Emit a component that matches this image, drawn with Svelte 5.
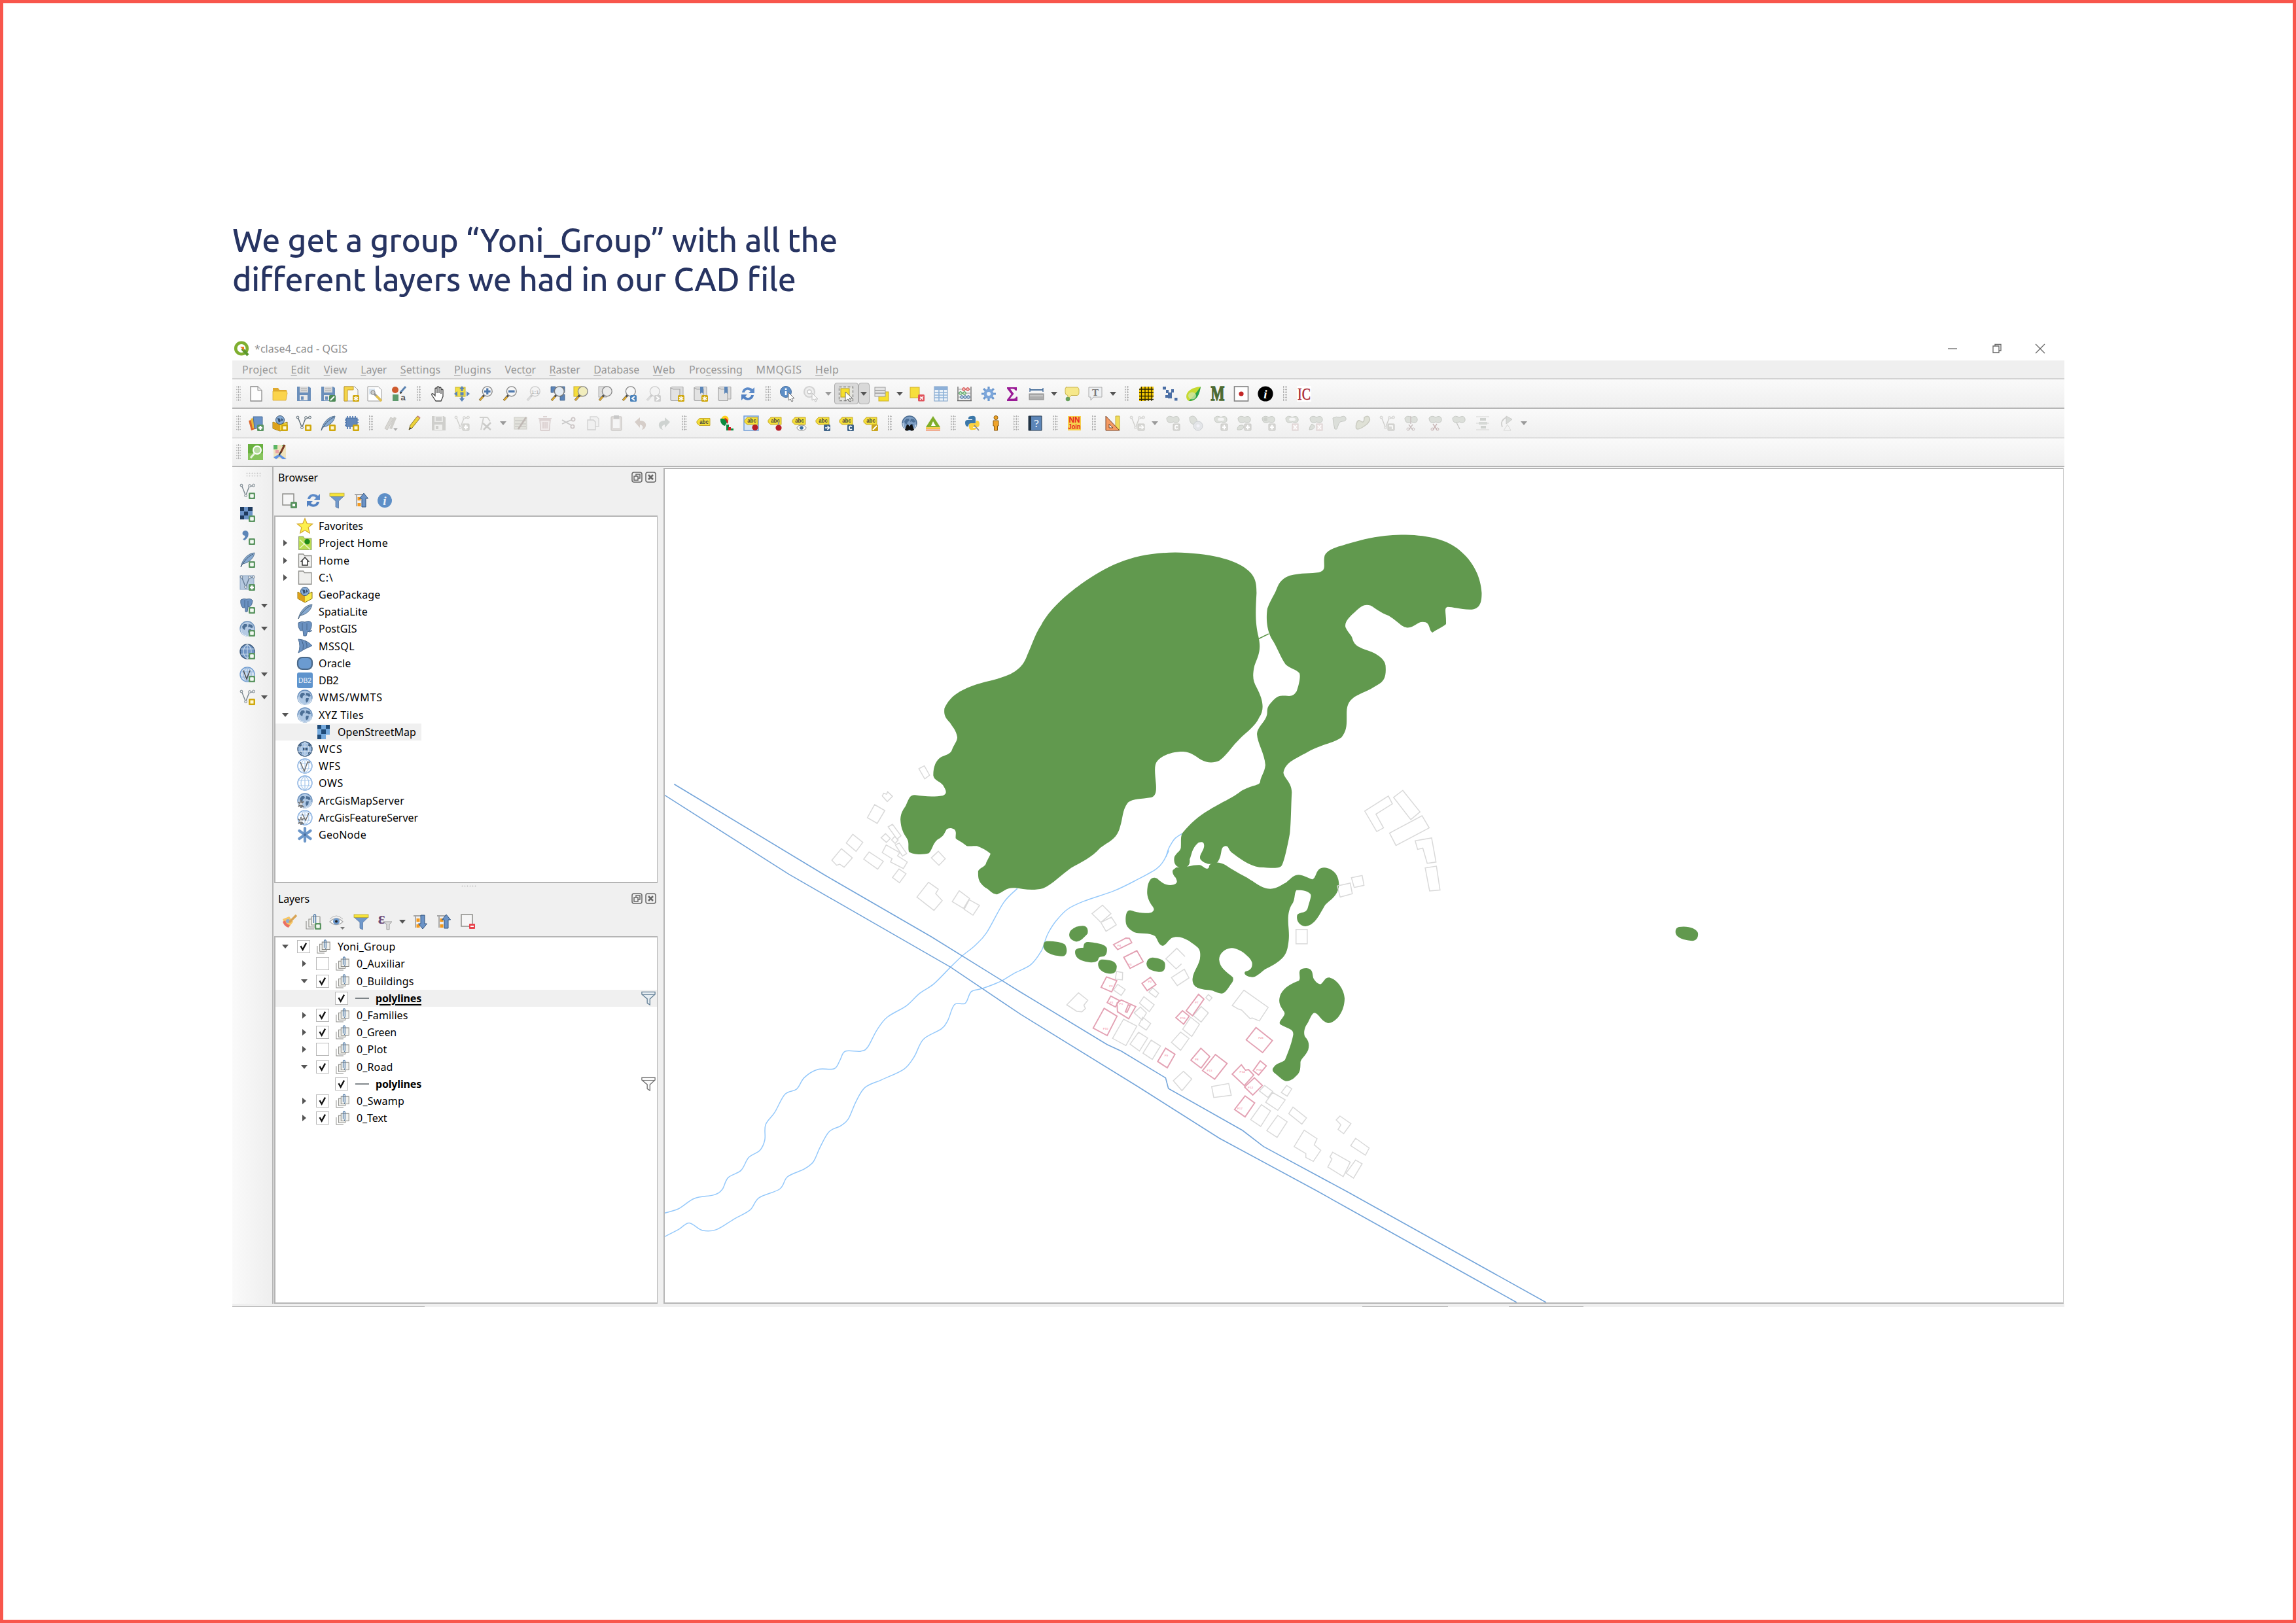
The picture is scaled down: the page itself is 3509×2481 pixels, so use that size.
<script>
  // Stretches or tightens the tracking of a label to a given width.
  function fit(node, width) {
    if (!width) return;
    const natural = node.getBoundingClientRect().width;
    node.style.letterSpacing = (width - natural) / node.textContent.length + 'px';
  }

  // Smooth curve through a flat list of points.
  function smooth(list) {
    const n = list.length / 2;
    const p = (i) => {
      const k = Math.max(0, Math.min(n - 1, i));
      return [list[k * 2], list[k * 2 + 1]];
    };
    let d = `M${p(0)}`;
    for (let i = 0; i < n - 1; i++) {
      const [a, b, c, e] = [p(i - 1), p(i), p(i + 1), p(i + 2)];
      d += `C${b[0] + (c[0] - a[0]) / 6} ${b[1] + (c[1] - a[1]) / 6} ${c[0] - (e[0] - b[0]) / 6} ${c[1] - (e[1] - b[1]) / 6} ${c[0]} ${c[1]}`;
    }
    return d;
  }

  const lens = (fill, stroke = '#8a8a8a', handle = '#e0a92c', tip = '#4a4a4a') =>
    `<path d="M10.5 13.5L3 22" stroke="${tip}" stroke-width="3.4"/><path d="M8 16.6L3.2 22" stroke="${handle}" stroke-width="2.6"/><circle cx="14.8" cy="8.3" r="7.4" fill="${fill}" stroke="${stroke}" stroke-width="1.4"/>`;
  const badge = (color, glyph = '') =>
    `<rect x="14" y="14" width="10" height="10" rx="1.5" fill="${color}"/>${glyph}`;
  const plusGlyph = '<path d="M19 16v6M16 19h6" stroke="#fff" stroke-width="2.6"/>';
  const boxGlyph = '<rect x="16.5" y="16.5" width="5" height="5" fill="#fff8d0"/>';
  const starGlyph = '<path d="M19 15.5v7M15.8 17.3l6.4 3.6M22.2 17.3l-6.4 3.6" stroke="#fff" stroke-width="1.5"/>';
  const green = badge('#5a9460', '<rect x="16.2" y="16.2" width="5.600" height="5.600" rx="1" fill="#f2f8f2"/>');
  const greenPlus = badge('#5a9460', plusGlyph);
  const gold = badge('#cfa70c', starGlyph);
  const goldBox = badge('#cfa70c', boxGlyph);
  const vee = (c) =>
    `<path d="M3.5 3.5L9.5 18.5L15 4.5L21 3.5" fill="none" stroke="${c}" stroke-width="1.4"/><g fill="#eee" stroke="${c}"><circle cx="3" cy="3" r="1.9"/><circle cx="9.5" cy="18.5" r="1.9"/><circle cx="15.5" cy="3.5" r="1.9"/><circle cx="21.5" cy="3" r="1.9"/></g>`;
  const feather = '<path d="M2 23C4 12 12 2 23 1C22 9 15 16 5 18" fill="#86a9d0" stroke="#56728f"/><path d="M2 23C7 13 14 6 21 3" fill="none" stroke="#42566b"/>';
  const floppy = (body, a, b) =>
    `<path d="M2 1h18l3 2v20H2z" fill="${body}"/><rect x="6" y="1" width="13" height="9" fill="${a}"/><path d="M8 4h9M8 7h9" stroke="#aaa"/><rect x="6" y="14" width="12" height="8" fill="${b}"/><rect x="8" y="16" width="4" height="5" fill="${body}"/>`;
  const globe = (fill, line, land = '') =>
    `<circle cx="12" cy="12" r="11" fill="${fill}" stroke="${line}" stroke-width="1.4"/>${land}`;
  const gridLines = (c, w = 1.2) =>
    `<path d="M1.5 8h21M1.5 16h21M12 1v22M12 1C4 7 4 17 12 23M12 1C20 7 20 17 12 23" fill="none" stroke="${c}" stroke-width="${w}"/>`;
  const land = '<path d="M4 9l3-4 4 0 1 3-3 2-1 4-3-2zM14 5l5 1 2 4-3 1-3-2-2 1zM14 13l4 0-1 5-3 2-1-4z" fill="#4c6f96"/><path d="M2 12a10 10 0 0020 2" fill="none" stroke="#dce8f4" stroke-width="1.200"/>';
  const refresh = '<path d="M3 10C4 2 14 0 19 5L22 2V11H13L16 8C12 4 8 6 7 10z" fill="#5c8ac8"/><path d="M21 14C20 22 10 24 5 19L2 22V13H11L8 16C12 20 16 18 17 14z" fill="#5281c2"/>';
  const funnel = '<path d="M1 5h22L14.5 13V24L10 22V13z" fill="#6f98cb" stroke="#5876a2" stroke-width=".8"/><rect x="1" y="1" width="22" height="4.500" fill="#f6e43a" stroke="#b8a53b" stroke-width=".8"/>';
  const label = (dy) => `<g transform="translate(0 ${dy})"><path d="M2 7.500L6 3H22V14H6L2 10.500z" fill="#f4e038" stroke="#c4a62c"/><text x="13" y="11.300" font-size="8.500" font-weight="700" text-anchor="middle" fill="#444" font-family="Liberation Sans, sans-serif" textLength="13.500" lengthAdjust="spacingAndGlyphs">abc</text></g>`;
  const tag = label(0);
  const arrowDir = (up) =>
    `<path d="M2 3h15M5 3v18" stroke="#a5a5a5" stroke-width="1.800" fill="none"/><rect x="6.5" y="7" width="5" height="5" fill="#f59a1d"/><rect x="6.5" y="16" width="5" height="5" fill="#f59a1d"/>` +
    (up ? '<path d="M13 22V9H9.5L16 1L22.5 9H19V22z" fill="#6b93c7" stroke="#33557f"/>' : '<path d="M13 2V15H9.5L16 23L22.5 15H19V2z" fill="#6b93c7" stroke="#33557f"/>');
  const book = '<path d="M3 4C3 2 4 1.500 6 1.500H22V20H8" fill="#ddd" stroke="#a5a5a5"/><path d="M3 3v18q0 1.500 3 1.500h11V5H7z" fill="#e2e2e2" stroke="#a5a5a5" stroke-width="1.200"/>';
  const clip = '<g fill="#f3f3ef" stroke="#8b8b87" stroke-width="1.100"><path d="M1 11v12h12" fill="none"/><path d="M5 8h11v12H5z"/><path d="M9 4.500h13V17H9z"/></g><path d="M12.500 14V3q0-2 1.600-2T15.600 3v11q0 2-1.600 2" fill="none" stroke="#4a77a6" stroke-width="1.300"/>';
  const g = '#cfcfcc';
  const blob = '<path d="M3 4Q7-1 13 3Q20-1 22 5Q23 11 17 11Q13 9 10 11Q3 12 3 4z" fill="#dcdfda" stroke="#c6c9c4"/>';
  const gb = (inner = '') => `<rect x="13" y="13" width="10" height="10" rx="1" fill="#d8d8d5" stroke="#c6c6c3"/>${inner}`;
  const gStar = '<path d="M18 14.500v7M15 18h6" stroke="#fff" stroke-width="2"/>';

  const ICONS = {
    new: '<path d="M4 1h11l6 6v16H4z" fill="#fefefe" stroke="#8b8b8b" stroke-width="1.3"/><path d="M15 1v6h6" fill="#eee" stroke="#8b8b8b"/>',
    open: '<path d="M1 3h8l2 3h11v4H1z" fill="#e0aa30"/><path d="M1 8h21l1 3-2 11H1z" fill="#fbd44c" stroke="#d9a82f" stroke-width=".8"/>',
    save: floppy('#6b8fbb', '#d8d8d8', '#e9e9e9'),
    saveas: floppy('#6b8fbb', '#d8d8d8', '#e9e9e9') + badge('#4c8a55', '<path d="M16 22l6-6" stroke="#fff" stroke-width="2"/>'),
    layout: '<path d="M1 1h16l5 5v17H1z" fill="#f8f8f4" stroke="#9a9a9a"/><path d="M1 1h14v5H6v17H1z" fill="#f3d54a" stroke="#c79c27"/>' + gold,
    manager: '<path d="M1 1h16l5 5v17H1z" fill="#fff" stroke="#999"/><path d="M3 4h9v9H3z" fill="#d9e4ef"/><path d="M8 9l13 13" stroke="#999" stroke-width="3.400"/><path d="M14 15l8 8" stroke="#e3c04c" stroke-width="3.600"/><circle cx="9" cy="10" r="3.200" fill="#ccc" stroke="#888"/>',
    style: '<circle cx="6" cy="6" r="5" fill="#cf5b2e"/><path d="M14 10L22 1" stroke="#5b82b0" stroke-width="3"/><path d="M13 11l3-1" stroke="#333" stroke-width="2"/><rect x="2" y="13" width="9" height="10" fill="#5d9a6c"/><text x="18" y="22" font-size="13" text-anchor="middle" font-weight="700" fill="#555" font-family="Liberation Sans, sans-serif">a</text>',
    hand: '<path d="M8 23L2 14Q1 11 4 12L7 15V4Q8.500 2 10 4V11V2Q11.500 0 13 2V11V3Q14.500 1 16 3V12V6Q17.500 4 19 6V16L16 23z" fill="#fff" stroke="#444" stroke-width="1.300"/>',
    pan: '<rect x="2" y="2" width="15" height="14" fill="#f1df45" stroke="#c9b32c"/><g fill="#5b84b8"><path d="M12 0l4 5H8zM12 24l4-5H8zM0 12l5-4v8zM24 12l-5-4v8z"/><rect x="9.500" y="9.500" width="5" height="5"/><rect x="10.500" y="4" width="3" height="4"/><rect x="10.500" y="16" width="3" height="4"/></g>',
    zin: lens('#f7f7f7') + '<path d="M14.800 3.500v9.600M10 8.300h9.600" stroke="#4f79ad" stroke-width="3.200"/>',
    zout: lens('#f7f7f7') + '<path d="M10 8.300h9.600" stroke="#4f79ad" stroke-width="3.400"/>',
    z1: lens('#f4f4f4', '#ccc', '#ddd', '#c8c8c8') + '<text x="14.800" y="11.500" font-size="8" text-anchor="middle" fill="#bbb" font-weight="700" font-family="Liberation Sans, sans-serif">1:1</text>',
    full: '<g fill="#5b84b8" stroke="#3f5f85" stroke-width=".8"><path d="M2 1h7v6H6v3H2zM23 1h-7v6h3v3h4zM23 22h-7v-6h3v-3h4z"/></g>' + lens('#e4ebf2', '#777'),
    zsel: '<rect x="1" y="1" width="12" height="15" fill="#f5dd3a" stroke="#c9ad2c"/>' + lens('#f1edbd'),
    zlay: '<rect x="2" y="1" width="12" height="16" fill="#ddd" stroke="#aaa"/>' + lens('#ececec'),
    zlast: lens('#f7f7f7') + badge('#4b83bb', '<path d="M21 16l-4 3 4 3" fill="none" stroke="#fff" stroke-width="2"/>'),
    znext: lens('#f4f4f4', '#ccc', '#ddd', '#ccc') + badge('#cfcfcf', '<path d="M17 16l4 3-4 3" fill="none" stroke="#fff" stroke-width="2"/>'),
    bm1: book + gold,
    bm2: book + '<path d="M12 1v11l2.500-2 2.500 2V1z" fill="#5c86b8"/>' + gold,
    bm3: book + '<path d="M12 1v11l2.500-2 2.500 2V1z" fill="#5c86b8"/>',
    refresh,
    identify: '<circle cx="10" cy="9" r="8.500" fill="#5e8fc7" stroke="#476f9f"/><path d="M10 8v6M10 3.500v2.500" stroke="#fff" stroke-width="2.600"/><path d="M14 10l9 9h-4l2 4-2 1-2-4-3 2z" fill="#fff" stroke="#777"/>',
    action: '<circle cx="10" cy="9" r="8" fill="#eee" stroke="#d2d2d2" stroke-width="2.200"/><circle cx="10" cy="9" r="3" fill="#fff" stroke="#c9c9c9" stroke-width="1.400"/><path d="M14 11l9 9h-4l2 3-2 1-2-4-3 2z" fill="#fafafa" stroke="#c0c0c0"/>',
    select: '<rect x="1.500" y="1.500" width="21" height="21" fill="#e4e4de" stroke="#888" stroke-width="1.400" stroke-dasharray="4 2.500"/><rect x="4" y="4" width="13" height="13" fill="#f6df2c" stroke="#b79c1f"/><path d="M11 9l11 10h-5l3 4-2 1-3-4-4 3z" fill="#fff" stroke="#666"/>',
    selval: '<rect x="7" y="9" width="15" height="14" fill="#f6df2c" stroke="#c9ad2c"/><rect x="1" y="2" width="16" height="14" fill="#e4e4e4" stroke="#9c9c9c"/><path d="M1 7h16M1 11h16" stroke="#9c9c9c" stroke-width="1.400"/>',
    desel: '<rect x="1" y="2" width="14" height="16" fill="#f6df3c" stroke="#d1b02f"/><rect x="13" y="13" width="10" height="10.500" rx="1.500" fill="#e0525b"/><path d="M16 21l5-5M16 17q4 0 4 4" stroke="#fff" stroke-width="1.500" fill="none"/>',
    table: '<rect x="2" y="1" width="20" height="22" fill="#eaf1f8" stroke="#7a9cc4"/><rect x="2" y="1" width="20" height="5" fill="#8db0d8"/><path d="M2 10h20M2 14h20M2 18h20M9 6v17M16 6v17" stroke="#8fb2d8" stroke-width="1.600"/>',
    abacus: '<path d="M2 1v22M22 1v22M1 22.500h22" stroke="#666" stroke-width="1.300"/><path d="M2 5h20M2 11h20M2 17h20" stroke="#999"/><g stroke-width="1"><g fill="#f6b4b0" stroke="#c33"><circle cx="11" cy="5" r="2.300"/><circle cx="17" cy="5" r="2.300"/></g><g fill="#bfe4c0" stroke="#3a8f4a"><circle cx="6" cy="11" r="2.300"/><circle cx="12" cy="11" r="2.300"/></g><g fill="#b9cfe4" stroke="#3d6696"><circle cx="8" cy="17" r="2.300"/><circle cx="13" cy="17" r="2.300"/><circle cx="18" cy="17" r="2.300"/></g></g>',
    gear: '<g stroke="#6b98cf" stroke-width="3.200"><path d="M12 1v22M1 12h22M4.200 4.200l15.600 15.600M19.800 4.200L4.200 19.800"/></g><circle cx="12" cy="12" r="7.500" fill="#7ca6da"/><circle cx="12" cy="12" r="3" fill="#eef3f9"/>',
    sigma: '<path d="M4 2h15v5h-2q-1-2.500-4-2.500H9L14.500 12L8.500 19.500H14q3 0 4-3h2V23H4v-2L10.500 12.500L4 4z" fill="#9a1a96"/>',
    measure: '<path d="M2 6h20" stroke="#3d6696" stroke-width="1.800"/><path d="M2 3v6M22 3v6" stroke="#3d6696" stroke-width="1.300"/><rect x="1" y="12" width="22" height="9" fill="#adadad" stroke="#8c8c8c"/><path d="M2 15h20" stroke="#ddd"/>',
    tip: '<path d="M3 2h18q2 1 2 4v5q0 3-3 3.500H11l-5 6V14.500Q2 14 2 10V5q0-3 2-3z" fill="#f6e88b" stroke="#c9b553"/><circle cx="6" cy="20" r="3.300" fill="#68a05d"/>',
    annot: '<path d="M2 2h20v15H9l-4 5v-5H2z" fill="#eef0f2" stroke="#aaa"/><text x="12" y="14.500" font-size="15" font-weight="700" text-anchor="middle" fill="#777" font-family="Liberation Serif, serif">T</text>',
    grid: '<path d="M4 1h19v16l-4 4-12 2H1V5z" fill="#f5c800"/><path d="M1 5h22M1 10h22M1 15.500h22M1 20.500h22M4.500 1v22M10 1v22M15 1v22M20 1v22" stroke="#2b2500" stroke-width="1.300"/>',
    dots: '<g fill="#4b6fa5"><rect x="1" y="1" width="5" height="4.500"/><rect x="6" y="6" width="4" height="5"/><rect x="9" y="10" width="6" height="9"/><rect x="14" y="5" width="4" height="5"/><rect x="5" y="14" width="5" height="4"/><rect x="19" y="18" width="4.500" height="4.500"/></g>',
    leaf: '<path d="M23 1C10 2 1 8 1 16q0 5 4 7C16 24 21 14 23 1z" fill="#c7da31"/><path d="M23 1C21 14 17 23 5 23q8-8 18-22z" fill="#29a34a"/><ellipse cx="10" cy="15" rx="6" ry="5.500" fill="#cfe6a9" opacity=".8"/>',
    em: '<text x="12" y="22" font-size="31" font-weight="700" text-anchor="middle" fill="#4d6a30" stroke="#4d6a30" stroke-width="1.400" font-family="Liberation Serif, serif" textLength="21" lengthAdjust="spacingAndGlyphs">M</text>',
    card: '<rect x="1.500" y="1" width="21" height="22" fill="#fff" stroke="#808080" stroke-width="1.600"/><circle cx="12" cy="12" r="3.600" fill="#c32626"/>',
    info: '<circle cx="12" cy="12" r="11.600" fill="#000"/><text x="12" y="19" font-size="19" font-style="italic" font-weight="700" text-anchor="middle" fill="#fff" font-family="Liberation Serif, serif">i</text>',
    ic: '<rect x="1" y="0" width="22" height="24" fill="#fff"/><text x="12" y="21" font-size="26" text-anchor="middle" fill="#a9232c" stroke="#a9232c" stroke-width=".4" font-family="Liberation Serif, serif" textLength="20" lengthAdjust="spacingAndGlyphs">IC</text>',
    sources: '<path d="M1 8l12-3 3 14-11 4z" fill="#d9652b"/><path d="M4 5l13-3 2 15-12 3z" fill="#e9b83a"/><path d="M8 2h14v16l-12 2z" fill="#6b93c7" stroke="#456b99"/>' + greenPlus,
    gpkg: '<path d="M1 10l11 4 11-4v10l-11 4-11-4z" fill="#f6d83a" stroke="#8a7010"/><path d="M1 10l11 4v10l-11-4z" fill="#dca11a"/><circle cx="12" cy="7" r="6.500" fill="#86abd6" stroke="#3c5775"/><path d="M8 4l4 1 1 4-3 2zM14 4l3 3-3 2z" fill="#35506e"/>',
    newshape: vee('#5c6b75') + goldBox,
    feathernew: feather + goldBox,
    chip: '<rect x="4" y="4" width="17" height="13" fill="#6288bb" stroke="#4a6e9e"/><path d="M6 1v3M10 1v3M14 1v3M18 1v3M6 17v4M10 17v4M2 7h2M2 11h2M2 15h2M21 7h2M21 11h2" stroke="#6288bb" stroke-width="2"/>' + goldBox,
    pencils: '<path d="M3 20L12 3l4 2L7 22z" fill="#d8d7d3" stroke="#c8c6c3"/><path d="M10 20L17 2l4 2-7 17z" fill="#d0cfcb"/><path d="M16 19.500h7l-3.500 4z" fill="#aaa"/>',
    pencil: '<path d="M4 22l2-7L17 1l4 3L9 19z" fill="#ecd23a" stroke="#8e7a2a"/><path d="M4 22l1.500-4 3 2z" fill="#444"/><path d="M17 1l4 3" stroke="#c88" stroke-width="2"/>',
    gsave: floppy(g, '#e9e9e7', '#efefed'),
    gvee: vee(g) + gb(gStar),
    gnode: '<path d="M3 3h12M9 3L5 22M15 3l4 6" stroke="#d0d0ce" stroke-width="1.800" fill="none"/><path d="M8 12l12 10M20 11L9 22" stroke="#cacac8" stroke-width="2.600"/>',
    gform: '<rect x="2" y="3" width="19" height="18" fill="#e2e2dc" stroke="#cdcdc8"/><path d="M3 8h17M3 13h17M3 17h17" stroke="#ccccc6" stroke-width="1.400"/><path d="M8 21L20 3" stroke="#c0b9b5" stroke-width="2.600"/>',
    gtrash: '<path d="M4 7h16l-1.500 16h-13z" fill="#f0ebeb" stroke="#d3c8c8" stroke-width="1.300"/><path d="M2 5h20M9 2h6M9 10v10M12 10v10M15 10v10" stroke="#d3c8c8" stroke-width="1.400"/>',
    gcut: '<path d="M2 7l14 8M2 13l14-6" stroke="#c8c8c8" stroke-width="1.800"/><circle cx="19" cy="6" r="2.600" fill="none" stroke="#ccc5c5" stroke-width="1.800"/><circle cx="18" cy="17" r="2.600" fill="none" stroke="#ccc5c5" stroke-width="1.800"/>',
    gcopy: '<path d="M8 2h10l3 3v12H8z" fill="#f1f1f1" stroke="#d6d6d6" stroke-width="1.300"/><path d="M4 7h9l3 3v12H4z" fill="#f0f0f0" stroke="#cfcfcf" stroke-width="1.300"/>',
    gpaste: '<rect x="4" y="2" width="16" height="21" rx="1.500" fill="#dfdcda" stroke="#cecbc9" stroke-width="1.300"/><rect x="7" y="6" width="10" height="13" fill="#f5f5f5"/><rect x="8" y="0" width="8" height="5" fill="#c8c8c8"/>',
    gundo: '<path d="M3 10L11 3v5q10 0 9 8-1 5-6 6 4-6-3-8v5z" fill="#d6cec9"/>',
    gredo: '<path d="M21 10L13 3v5Q3 8 4 16q1 5 6 6-4-6 3-8v5z" fill="#cfd3d1"/>',
    abc: label(1.5),
    diagram: '<circle cx="9" cy="6" r="5.500" fill="#ffcf1a"/><path d="M2 5q6-1 11 4l-4 7q-8-2-7-11z" fill="#0b8a3e"/><path d="M8 4a6 6 0 015 9z" fill="#cc1f24"/><path d="M11 14h4v9h-4z" fill="#0b8a3e"/><path d="M14 18h4v5h-4z" fill="#cc1f24"/><path d="M18 20h4v3h-4z" fill="#0b8a3e"/>',
    abcpin: '<rect x="1" y="1" width="22" height="22" fill="#d6e5f6" stroke="#6b9bd6" stroke-width="1.400"/>' + tag + '<circle cx="18" cy="18.500" r="4.500" fill="#b71f27"/>',
    abcred: tag + '<circle cx="18" cy="19" r="4.600" fill="#b71f27"/><path d="M18 10v5" stroke="#999" stroke-width="2"/>',
    abceye: tag + '<ellipse cx="16" cy="19" rx="7" ry="4" fill="#fff" stroke="#888"/><circle cx="16" cy="19" r="2.800" fill="#3a6c9f"/>',
    abcmove: tag + badge('#3e6388', '<path d="M16 19h6M19.500 16l3 3-3 3" stroke="#fff" stroke-width="1.600" fill="none"/>'),
    abcrot: tag + badge('#3e6388', '<path d="M21 17q-4-2-4 2t4 2" stroke="#fff" stroke-width="1.800" fill="none"/>'),
    abcedit: tag + badge('#c9a51c', '<path d="M16 22l6-6" stroke="#fff" stroke-width="2"/>'),
    search: globe('#7f9fc4', '#4a6b90', land) + '<path d="M5 22l3-8h2l2 3 2-3h2l3 8q-4 3-6 0h-2q-3 3-6 0z" fill="#111"/>',
    tri: '<path d="M12 1L23 18H1z" fill="#7fae2a"/><path d="M12 9l4 7H9z" fill="#fff"/><path d="M1 19.500h22" stroke="#f6c12c" stroke-width="2.500"/><path d="M1 22.500h22" stroke="#ef8f6a" stroke-width="2"/>',
    python: '<path d="M11 1q6-1 6 4v6q0 2-3 2H8q-2 0-2 4H4q-3-1-3-6 0-4 4-4h7V6H6V4q0-3 5-3z" fill="#3b77a8"/><path d="M13 22q-6 1-6-4v-4q0-2 3-2h5q3 0 3-4h2q3 1 3 5 0 5-4 5h-6v1h5v1q0 2-5 2z" fill="#fcd23f"/><path d="M15 15l7 8" stroke="#888" stroke-width="1.800"/>',
    person: '<circle cx="12" cy="3.500" r="3" fill="#eea327" stroke="#8a5a10"/><path d="M8 8h8v8h-1.500v7H9.500v-7H8z" fill="#f0a42a" stroke="#8a5a10"/>',
    help: '<path d="M2 1h20v22H2z" fill="#5d86b8" stroke="#2a3c50"/><path d="M2 1h4v22H2z" fill="#233445"/><text x="14" y="18" font-size="17" text-anchor="middle" fill="#fff" font-family="Liberation Serif, serif">?</text>',
    nn: '<rect x="2" y="1" width="20" height="22" fill="#f5cf4d"/><g fill="#e8261f" font-weight="700" text-anchor="middle" font-family="Liberation Sans, sans-serif"><text x="12" y="11" font-size="12.500" textLength="17" lengthAdjust="spacingAndGlyphs">NN</text><text x="12" y="21" font-size="11.500" textLength="19" lengthAdjust="spacingAndGlyphs">Join</text></g>',
    ruler: '<path d="M16 1h6v21h-6z" fill="#f0dc5a" stroke="#c6ad33"/><path d="M1 1v22h21z" fill="#f59b63" stroke="#7a4326"/><path d="M6 13v6h6z" fill="#f7f7f7" stroke="#7a4326"/>',
    gmove: vee(g) + gb('<path d="M15 18h6M18.500 15l3 3-3 3" stroke="#fff" stroke-width="1.500" fill="none"/>'),
    b1: blob + gb('<path d="M20 16q-4-2-4 2t4 2" stroke="#fff" stroke-width="1.500" fill="none"/>'),
    b2: '<path d="M2 3q5-4 9 0t2 9q-3 3-7 1T2 3z" fill="#dcdfda" stroke="#c6c9c4"/><circle cx="15" cy="16" r="7" fill="#e3e5e8" stroke="#cbced2"/><circle cx="15" cy="16" r="2.500" fill="#f2f2f8"/>',
    b3: blob + '<ellipse cx="13" cy="6" rx="5" ry="2.500" fill="#f5f5f5"/>' + gb(gStar),
    b4: blob + '<path d="M2 22q0-6 5-7t5 3q-2 5-10 4z" fill="#dcdfda" stroke="#c6c9c4"/>' + gb(gStar),
    b5: blob + '<circle cx="8" cy="6" r="3" fill="#ced1cc"/>' + gb(gStar),
    b6: blob + '<ellipse cx="13" cy="6" rx="5" ry="2.500" fill="#f5f5f5"/><rect x="13" y="13" width="9" height="10" fill="#ebe2e2" stroke="#dacece"/><path d="M15 15l5 6M20 15l-5 6" stroke="#fff" stroke-width="1.600"/>',
    b7: blob + '<path d="M2 22q0-5 4-9l4 3q0 6-8 6z" fill="#dcdfda" stroke="#c6c9c4"/><rect x="13" y="13" width="9" height="10" fill="#ebe2e2" stroke="#dacece"/><path d="M15 15l5 6M20 15l-5 6" stroke="#fff" stroke-width="1.600"/>',
    b8: '<path d="M2 4Q7 1 13 3Q20-1 22 4Q23 9 17 9Q12 9 11 13L8 21H5L3 12z" fill="#dcdfda" stroke="#c6c9c4"/>',
    b9: '<path d="M14 3q6-4 8 1t-6 11-12 6-2-8 7-4 5-6z" fill="#dfe1d6" stroke="#cacbc1" stroke-width="1.500"/>',
    b10: vee(g) + gb('<path d="M15 16h5v5" stroke="#fff" stroke-width="1.500" fill="none"/>'),
    b11: blob + '<path d="M12 1v12M9 14l6 8M15 14l-6 8" stroke="#c8bebe" stroke-width="1.400"/><circle cx="8" cy="21" r="2" fill="none" stroke="#c8bebe"/><circle cx="16" cy="21" r="2" fill="none" stroke="#c8bebe"/>',
    b12: blob + '<path d="M9 13l6 9M15 13l-6 9" stroke="#c8b4b4" stroke-width="1.400"/><circle cx="8" cy="21" r="2" fill="none" stroke="#c8b4b4"/><circle cx="16" cy="21" r="2" fill="none" stroke="#c8b4b4"/>',
    b13: blob + '<path d="M9 11l5 10" stroke="#c6c6c4" stroke-width="1.400"/>',
    b14: '<path d="M2 2h20M2 22h20M2 12h20" stroke="#d6d6d4" stroke-width="1.200"/><rect x="8" y="4" width="9" height="4" fill="#cfd2cf"/><rect x="6" y="10" width="13" height="4" fill="#d6d9d6"/><rect x="9" y="16" width="8" height="4" fill="#cfd2cf"/>',
    b15: '<path d="M12 3Q2 8 6 18" fill="none" stroke="#cbcbc9" stroke-width="1.500"/><path d="M12 1v12l9-7z" fill="#d8dbd8" stroke="#cbcbc9"/><path d="M14 14l5 9H8z" fill="#f3f3f3" stroke="#d8d8d6"/>',
    qsearch: '<rect x="0" y="0" width="23" height="24" fill="#69b03f"/><path d="M0 14h23v10H0z" fill="#86c45c"/><circle cx="14" cy="9" r="6" fill="#b6dba0" stroke="#fff" stroke-width="2"/><path d="M10 14l-6 7" stroke="#e9f4e0" stroke-width="3"/>',
    osm: '<rect x="2" y="1" width="19" height="21" fill="#efe3bd"/><path d="M2 1h6v7H2zM15 1h5l-3 6z" fill="#5cb564"/><path d="M5 9h5v5H5z" fill="#eaa0a4"/><path d="M2 20l9-5 11 8H16l-5-4-5 4z" fill="#5f93e4"/><path d="M19 1L13 13" stroke="#7a3a24" stroke-width="3"/><path d="M13 12l-2.500 5" stroke="#333" stroke-width="2.200"/>',
    // side toolbar
    svee: vee('#7a878f') + green,
    sraster: '<g><rect x="1" y="1" width="19" height="19" fill="#6b93c7"/><path d="M1 1h6v6H1zM13 1h7v6h-7zM1 14h6v6H1zM7 8h6v6H7z" fill="#1f3b5e"/></g>' + green,
    scomma: '<path d="M5 4q4-4 8 0 3 7-5 13l-3-1.500q4-3 3.500-5.500Q3 9 5 4z" fill="#5d86b8"/>' + green,
    sfeather: feather + green,
    svirt: '<rect x="1" y="1" width="21" height="21" fill="#b5c8de" stroke="#8ba5c3"/>' + vee('#667d96') + greenPlus,
    selephant: '<path d="M2 3q5-3 9-1 6-2 9 2-1 8-4 9l-3 1-1 7H9V15H5Q1 11 2 3z" fill="#6a91c1" stroke="#4a6a90"/><path d="M8 3v11M13 5v9" stroke="#4a6a90"/>' + green,
    sglobe: globe('#b4cae3', '#6f94be', land) + green,
    sgrid: globe('#6f95c4', '#3a587a', gridLines('#c6d8ea')) + green,
    sgv: globe('#d4e1f0', '#6f9bcf', gridLines('#8eb2da') + '<path d="M6 6l5 13 5-13" fill="none" stroke="#4a4a4a" stroke-width="1.500"/>') + green,
    sveegold: vee('#7a878f') + goldBox,
    // docks
    addbox: '<rect x="2" y="2" width="17" height="17" fill="#f6f6f6" stroke="#8d8d89" stroke-width="1.500"/>' + badge('#5a9460', '<rect x="17" y="17" width="4" height="4" fill="#fff"/>'),
    removebox: '<rect x="2" y="1" width="17" height="18" fill="#f6f6f6" stroke="#8d8d89" stroke-width="1.500"/><rect x="14" y="15" width="9" height="8" rx="1" fill="#e8434d"/><path d="M16 19h5" stroke="#fff" stroke-width="2"/>',
    funnel,
    up: arrowDir(true),
    down: arrowDir(false),
    about: '<circle cx="12" cy="12" r="11" fill="#5e8fc7"/><text x="12" y="19" font-size="19" font-style="italic" font-weight="700" text-anchor="middle" fill="#e8f0f8" font-family="Liberation Serif, serif">i</text>',
    brush: '<path d="M2 8l10-4 6 8-6 8q-7-2-10-12z" fill="#f6c667"/><path d="M2 12q3 8 9 9l2-4q-6-1-7-7z" fill="#ea6f62"/><circle cx="10" cy="11" r="3" fill="#8fabd6"/><path d="M12 13L23 2" stroke="#d9a456" stroke-width="3.400"/>',
    addgroup: clip + green,
    eye: '<path d="M1 12Q11 2 21 12 11 21 1 12z" fill="#fff" stroke="#aaa" stroke-width="1.300"/><path d="M1 8Q11-2 21 8" fill="none" stroke="#b4b4b4"/><circle cx="11" cy="11.500" r="5" fill="#6b98cc"/><circle cx="11" cy="11.500" r="2" fill="#222"/><path d="M17 20h7l-3.500 4z" fill="#777"/>',
    eps: '<text x="7" y="15" font-size="25" text-anchor="middle" fill="#6b4a77" font-family="Liberation Serif, serif" font-weight="700">ε</text><path d="M10 12h13l-4 4v8h-4v-8z" fill="#dcdcdc" stroke="#999"/>',
    // browser tree
    star: '<path d="M12 .5l3.300 8 8.200.500-6.300 5.400 2 8.600L12 18.400 4.800 23l2-8.600L.5 9l8.200-.5z" fill="#fdf04d" stroke="#d3a72b" stroke-width="1.200"/>',
    phome: '<path d="M2.500 2h7l2 3h10.500v17.500H2.500z" fill="#b9dc52" stroke="#93a077"/><path d="M4 7l16 15M4 20l9-8" stroke="#eef7cc" stroke-width="1.500"/><circle cx="15.500" cy="10" r="4.200" fill="#1f8a1a"/>',
    home: '<path d="M2.500 2h7l2 2.500h10.500V22H2.500z" fill="#f1f1ef" stroke="#90908c" stroke-width="1.300"/><path d="M12 7l5.500 6H16v6H8v-6H6.500z" fill="#fff" stroke="#333" stroke-width="1.500"/>',
    folder: '<path d="M2.500 2h7l2 2.500h10.500V22H2.500z" fill="#efefed" stroke="#90908c" stroke-width="1.300"/>',
    gpkg2: '<path d="M1 8l11 5 11-5v10l-11 6L1 18z" fill="#f8ea4a" stroke="#8a7010"/><path d="M1 8l11 5v11L1 18z" fill="#dca11a"/><circle cx="12" cy="7" r="6.500" fill="#86abd6" stroke="#3c5775"/><path d="M8 4l4 1 1 4-3 2zM14 4l3 3-3 2z" fill="#35506e"/>',
    feather,
    elephant: '<path d="M2 3q5-3 10-1 7-3 10 1 1 8-3 12h4l-4 2-3-1-2 7h-4l-1-8H5Q1 10 2 3z" fill="#6a91c1" stroke="#4a6a90"/><path d="M8 3v11M15 4v10" stroke="#4a6a90"/>',
    mssql: '<path d="M2 1q13 1 21 10l-11 5L2 22q4-10 0-21z" fill="#6a91c1" stroke="#4f6f96"/><path d="M7 2q4 8 2 15M13 4q3 6 2 11" stroke="#426289" fill="none"/>',
    oracle: '<rect x="1" y="3" width="22" height="18" rx="7" fill="#6b9bd0" stroke="#4a6888" stroke-width="2.200"/>',
    db2: '<rect x="0" y="0" width="24" height="24" rx="3" fill="#5f94cd"/><text x="12" y="15.500" font-size="10" text-anchor="middle" fill="#f2f6fb" font-family="Liberation Sans, sans-serif" textLength="20" lengthAdjust="spacingAndGlyphs">DB2</text>',
    wms: globe('#afc8e4', '#6a90bd', land),
    tile: '<rect x="2" y="1" width="19" height="22" fill="#74a9dd"/><path d="M2 1h6v6H2zM15 1h6v6h-6zM2 16h6v7H2zM8 8h7v7H8z" fill="#1f4b78"/><path d="M15 16h6v7h-6z" fill="#f0f0f0"/>',
    wcs: globe('#9dbce0', '#3a587a', '<path d="M4 5h4v4H2.500zM16 5h4l1.500 4H16zM9 10h7v4H9zM3 16h5v4zM16 16h5l-4 4z" fill="#3a587a"/>' + gridLines('#d6e3f0', 1)),
    wfs: globe('#fff', '#84addf', gridLines('#b0cdee') + '<path d="M5 6l6 14 5-14h4" fill="none" stroke="#6a6a6a" stroke-width="1.400"/>'),
    ows: globe('#fff', '#84addf', gridLines('#a8c8ec')),
    ams: globe('#afc8e4', '#6a90bd', land) + '<path d="M2 14l8 8M10 13l-8 8M6 11v12" stroke="#6a6a6a" stroke-width="1.800"/><circle cx="6" cy="17" r="2" fill="#ddd"/>',
    afs: globe('#fff', '#84addf', gridLines('#b0cdee') + '<path d="M8 6l5 10 5-11" fill="none" stroke="#6a6a6a" stroke-width="1.400"/>') + '<path d="M2 14l8 8M10 13l-8 8M6 11v12" stroke="#6a6a6a" stroke-width="1.800"/><circle cx="6" cy="17" r="2" fill="#ddd"/>',
    geonode: '<path d="M12 2v20M3.500 6l17 12M20.500 6l-17 12" stroke="#6b96c9" stroke-width="4.200" stroke-linecap="round"/><circle cx="12" cy="12" r="2" fill="#4a6f9f"/>',
    group: clip,
    line: '<path d="M1 12h23" stroke="#4a5258" stroke-width="1.500"/>',
    filter: '<path d="M1 1.500h22v4L14.500 13v10L10 20V13L1 5.500z" fill="#fafafa" stroke="#6e6e6e" stroke-width="1.400"/><path d="M1 6h22" stroke="#6e6e6e"/>',
    filterblue: '<path d="M1 1.500h22v4L14.500 13v10L10 20V13L1 5.500z" fill="#e6edf2" stroke="#5f7c93" stroke-width="1.400"/><path d="M1 6h22" stroke="#5f7c93"/>'
  };
  ICONS.gpkgnew = ICONS.gpkg + goldBox;

  const menus = [
    ['Pro', 'j', 'ect', 54], ['', 'E', 'dit', 29.5], ['', 'V', 'iew', 36], ['', 'L', 'ayer', 40],
    ['', 'S', 'ettings', 61.5], ['', 'P', 'lugins', 57], ['Vect', 'o', 'r', 47.5], ['', 'R', 'aster', 47],
    ['', 'D', 'atabase', 70], ['', 'W', 'eb', 34.5], ['Pro', 'c', 'essing', 82], ['MMQGIS', '', '', 70], ['', 'H', 'elp', 36]
  ];

  const bar1 = 'new open save saveas layout manager style | hand pan zin zout z1 full zsel zlay zlast znext bm1 bm2 bm3 refresh | identify action v- select* v* selval v desel table abacus gear sigma measure v tip annot v | grid dots leaf em card info | ic'.split(' ');
  const bar2 = 'sources gpkgnew newshape feathernew chip | pencils pencil gsave gvee gnode v- gform gtrash gcut gcopy gpaste gundo gredo | abc diagram abcpin abcred abceye abcmove abcrot abcedit | search tri | python person | help | nn | ruler gmove v- b1 b2 b3 b4 b5 b6 b7 b8 b9 b10 b11 b12 b13 b14 b15 v-'.split(' ');
  const bar3 = ['qsearch', 'osm'];

  const side = [['svee'], ['sraster'], ['scomma'], ['sfeather'], ['svirt'], ['selephant', 1], ['sglobe', 1], ['sgrid'], ['sgv', 1], ['sveegold', 1]];

  const browser = [
    ['Favorites', 'star', '', 68], ['Project Home', 'phome', 'right', 106], ['Home', 'home', 'right', 47.5],
    ['C:\\', 'folder', 'right', 22.5], ['GeoPackage', 'gpkg2', '', 94.5], ['SpatiaLite', 'feather', '', 75],
    ['PostGIS', 'elephant', '', 58.5], ['MSSQL', 'mssql', '', 55], ['Oracle', 'oracle', '', 49.5],
    ['DB2', 'db2', '', 30.5], ['WMS/WMTS', 'wms', '', 98], ['XYZ Tiles', 'wms', 'down', 69],
    ['OpenStreetMap', 'tile', '', 120, true], ['WCS', 'wcs', '', 37], ['WFS', 'wfs', '', 34],
    ['OWS', 'ows', '', 38], ['ArcGisMapServer', 'ams', '', 131], ['ArcGisFeatureServer', 'afs', '', 152],
    ['GeoNode', 'geonode', '', 73]
  ];

  const layers = [
    { name: 'Yoni_Group', level: 0, open: 'down', on: true, w: 88.5 },
    { name: '0_Auxiliar', level: 1, open: 'right', on: false, w: 74 },
    { name: '0_Buildings', level: 1, open: 'down', on: true, w: 87.5 },
    { name: 'polylines', level: 2, on: true, w: 70, leaf: true, current: true },
    { name: '0_Families', level: 1, open: 'right', on: true, w: 78.5 },
    { name: '0_Green', level: 1, open: 'right', on: true, w: 61 },
    { name: '0_Plot', level: 1, open: 'right', on: false, w: 46.5 },
    { name: '0_Road', level: 1, open: 'down', on: true, w: 55.5 },
    { name: 'polylines', level: 2, on: true, w: 70, leaf: true },
    { name: '0_Swamp', level: 1, open: 'right', on: true, w: 73 },
    { name: '0_Text', level: 1, open: 'right', on: true, w: 46.5 }
  ];

  const riverWest = smooth([1403,333,1350,373,1285,458,1240,495,1190,525,1145,557,1080,605,1025,632,975,667,900,700,860,737,825,785,798,797,738,797,718,822,695,847,632,849,580,872,550,905,505,920,465,972,430,1007,427,1050,408,1080,365,1100,335,1137,285,1158,262,1192,230,1207,155,1217,95,1246,40,1259]);
  const riverEastA = smooth([762,1250,745,1268,735,1290,728,1310,722,1340]);
  const riverEastB = smooth([634,0,610,50,580,85,500,133,400,185,270,233,200,270,150,325,118,378,104,415]);
  const riverEastC = smooth([1510,483,1495,512,1455,550,1390,575,1340,597,1268,618,1225,627,1202,660,1160,664,1135,708,1110,733,1040,763,1005,812,965,848,880,878,815,900,780,940,750,990,720,1010,675,1027,640,1072,615,1112,580,1133,515,1155,485,1190,405,1215,370,1250,310,1275,240,1306,185,1308,135,1287,95,1305,40,1326]);

  const plots = [[421,438,'F4'],[467,524,'F5'],[386,625,'F3'],[553,604,'F2'],[388,700,'F5'],[430,706,'F1'],[363,818,'F10'],[753,698,'F7'],[694,771,'F16'],[623,941,'F9'],[753,960,'F8'],[808,1010,'F13'],[1028,862,'F21'],[948,1016,'F14'],[1020,1008,'F15'],[983,1090,'F12'],[938,1186,'F17']];
</script>

{#snippet icon(name)}
  <svg class="icon" viewBox="0 0 24 24" fill="none">{@html ICONS[name]}</svg>
{/snippet}

{#snippet bar(items)}
  <i class="grip first"></i>
  {#each items as it}
    {#if it === '|'}<i class="grip"></i>
    {:else if it[0] === 'v' && it.length < 3}<span class="drop" class:dim={it === 'v-'} class:pressed={it === 'v*'}></span>
    {:else}<span class="slot" class:pressed={it.endsWith('*')}>{@render icon(it.replace('*', ''))}</span>{/if}
  {/each}
{/snippet}

{#snippet dockTitle(text, width)}
  <header class="dock-title">
    <span class="label" use:fit={width}>{text}</span>
    <svg class="dock-buttons" viewBox="0 0 38 17" fill="none" stroke="#666" stroke-width="1.5">
      <rect x="1" y="1" width="15" height="15" rx="3" /><rect x="22" y="1" width="15" height="15" rx="3" />
      <path d="M7 7V4h6v6h-3M4 7h6v6H4z" /><path d="M26 5l7 7M33 5l-7 7" stroke-width="2.6" />
    </svg>
  </header>
{/snippet}

<main class="page">
  <h1><span use:fit={925}>We get a group “Yoni_Group” with all the</span><br /><span use:fit={860}>different layers we had in our CAD file</span></h1>

  <section class="window">
    <div class="titlebar">
      <svg class="logo" viewBox="0 0 24 24" fill="none">
        <circle cx="12" cy="11.5" r="8.8" stroke="#7fae30" stroke-width="4.6" />
        <path d="M13 12l9 10" stroke="#5c982f" stroke-width="4.2" /><path d="M10 9h6v6z" fill="#ee7a22" />
      </svg>
      <span class="label" use:fit={142}>*clase4_cad - QGIS</span>
      <svg class="controls" viewBox="0 0 150 16" fill="none" stroke="#666" stroke-width="1.3">
        <path d="M1 8h14" /><path d="M70 4h9v10h-9zM73 4V1.500h9V11h-3" /><path d="M135 1l14 14M149 1l-14 14" />
      </svg>
    </div>
    <nav class="menubar">
      {#each menus as [a, u, b, w]}<span class="label" use:fit={w}>{a}{#if u}<u>{u}</u>{/if}{b}</span>{/each}
    </nav>
    <div class="toolbar">{@render bar(bar1)}</div>
    <div class="toolbar second">{@render bar(bar2)}</div>
    <div class="toolbar third">{@render bar(bar3)}</div>

    <div class="body">
      <aside class="side">
        <i class="side-grip"></i>
        {#each side as [name, drop]}
          <div class="side-row">{@render icon(name)}{#if drop}<span class="drop"></span>{/if}</div>
        {/each}
      </aside>

      <div class="docks">
        {@render dockTitle('Browser', 61)}
        <div class="dock-tools">
          {#each ['addbox', 'refresh', 'funnel', 'up', 'about'] as name}<span class="slot">{@render icon(name)}</span>{/each}
        </div>
        <div class="list browser">
          {#each browser as [text, ic, open, w, child]}
            <div class="row" class:child>
              <span class="twist {open}"></span>
              <span class="pic">{@render icon(ic)}</span>
              <span class="label" use:fit={w}>{text}</span>
            </div>
          {/each}
        </div>
        <div class="splitter"><i></i></div>
        {@render dockTitle('Layers', 48)}
        <div class="dock-tools lower">
          {#each ['brush', 'addgroup', 'eye', 'funnel', 'eps'] as name}<span class="slot">{@render icon(name)}</span>{/each}
          <span class="drop"></span>
          {#each ['down', 'up', 'removebox'] as name}<span class="slot">{@render icon(name)}</span>{/each}
        </div>
        <div class="list layers">
          {#each layers as l}
            <div class="row level{l.level}" class:current={l.current} class:leaf={l.leaf}>
              <span class="twist {l.open ?? ''}"></span>
              <span class="check">
                {#if l.on}<svg viewBox="0 0 20 20" fill="none" stroke="#111" stroke-width="2.6"><path d="M5 9l3.500 6L14.500 4" /></svg>{/if}
              </span>
              <span class="pic">{@render icon(l.leaf ? 'line' : 'group')}</span>
              <span class="label" use:fit={l.w}>{l.name}</span>
              {#if l.leaf}<span class="end">{@render icon(l.current ? 'filterblue' : 'filter')}</span>{/if}
            </div>
          {/each}
        </div>
      </div>

      <div class="map">
        <svg viewBox="1016 717 2137 1274" fill="none">
          <g class="river">
            <path transform="translate(1000 1180) scale(.39541 .53571)" d={riverWest} />
            <path transform="translate(1340 780) scale(.61224 .39541)" d={riverEastA} />
            <path transform="translate(1560 1300) scale(.35714 .33333)" d={riverEastB} />
            <path transform="translate(1000 1180) scale(.39541 .53571)" d={riverEastC} />
          </g>
          <g class="road">
            <path d="M1030.400 1198.700L1261 1338L1423 1431.800L1560 1516.700L1692 1596.700L1713.600 1606.700L1781.400 1647.700L1785.700 1664L1899 1728L1931 1752.700L2060 1822.300L2363 1991" />
            <path d="M1015 1215L1205.600 1336.400L1452.700 1478.400L1560 1550.700L1738.600 1660.700L1863.600 1740L2011.800 1820L2060 1847L2318 1991" />
          </g>
          <g class="wood">
            <g transform="translate(1340 780) scale(.61224 .39541)">
              <path d="M745 163C830 165 895 190 925 230C945 255 948 280 948 320C945 400 945 440 953 490C960 540 953 560 943 600C937 640 939 660 948 685C965 735 968 770 955 800C945 835 925 855 905 885C880 925 875 945 855 968C840 978 825 977 810 965C795 950 785 935 765 933C735 933 712 948 700 970C692 985 694 1010 697 1060C698 1085 697 1105 685 1110C660 1117 640 1113 627 1130C612 1160 615 1190 607 1225C600 1270 580 1280 558 1305C535 1345 510 1360 485 1383C460 1410 440 1445 415 1462C385 1473 365 1463 345 1460C322 1458 318 1475 300 1485C285 1482 285 1470 270 1458C252 1435 253 1420 253 1395C258 1380 268 1380 272 1368C276 1350 280 1345 284 1328C275 1315 262 1305 250 1298C235 1297 225 1302 222 1295C212 1280 200 1275 197 1268C196 1255 200 1245 194 1234C185 1226 178 1229 174 1234C168 1250 168 1258 157 1268C140 1280 140 1310 130 1326C115 1333 90 1332 80 1320C77 1300 82 1285 75 1268C62 1240 60 1220 59 1195C60 1165 68 1155 73 1140C82 1110 82 1102 95 1101C120 1107 145 1108 165 1103C178 1095 172 1080 165 1062C155 1045 143 1045 141 1025C141 990 148 965 162 953C178 943 185 940 188 925C193 905 200 895 201 878C198 850 190 840 183 822C170 800 167 790 169 765C180 730 195 710 215 695C250 665 290 660 320 642C350 625 365 600 373 570C390 510 395 480 410 445C430 385 470 330 510 285C580 210 640 165 745 163Z" />
              <path d="M1320 95C1380 97 1425 115 1455 155C1490 200 1508 260 1510 320C1510 350 1508 385 1480 384C1455 383 1435 373 1424 374C1415 378 1422 400 1421 440C1412 453 1400 458 1387 473C1378 465 1382 440 1370 433C1350 425 1345 452 1325 454C1310 452 1305 435 1278 408C1255 395 1245 378 1232 368C1218 362 1210 370 1197 388C1180 412 1167 430 1170 452C1178 478 1185 480 1188 500C1193 525 1205 530 1225 542C1250 555 1268 575 1270 600C1272 640 1268 660 1250 675C1225 700 1210 705 1192 722C1175 742 1173 760 1173 790C1173 830 1174 850 1160 878C1140 900 1110 905 1075 935C1040 965 1020 975 1015 1015C1018 1040 1035 1050 1036 1090C1034 1150 1034 1210 1031 1250C1025 1300 1018 1350 1012 1370C1008 1387 990 1383 955 1380C930 1375 905 1345 885 1322C875 1305 880 1300 870 1298C855 1303 865 1330 850 1362C835 1372 820 1370 808 1350C803 1335 815 1320 817 1300C818 1282 812 1280 803 1285C785 1310 787 1330 781 1350C783 1370 775 1385 760 1382C745 1380 740 1360 743 1340C750 1320 757 1320 759 1305C760 1280 758 1265 762 1250C780 1215 800 1185 830 1158C870 1122 890 1110 910 1085C935 1062 955 1065 957 1050C958 1030 968 1015 970 985C968 940 950 900 949 865C950 840 965 825 972 800C978 780 970 770 982 748C1000 715 1005 717 1020 717C1035 720 1040 718 1048 700C1055 670 1058 640 1055 630C1048 615 1030 612 1020 595C1005 560 1000 530 985 495C970 450 973 400 975 380C985 340 992 330 998 305C1005 275 1015 262 1030 253C1060 240 1085 245 1103 240C1125 232 1113 210 1118 175C1125 150 1150 142 1180 128C1220 110 1260 95 1320 95Z" />
              <path class="link" d="M953 497L978 478" />
            </g>
            <g transform="translate(1560 1300) scale(.35714 .33333)">
              <path d="M665 78C710 80 730 66 765 67C780 70 785 83 797 84C812 80 800 68 815 62C830 50 860 55 878 68C900 85 930 102 960 120C1010 150 1030 175 1068 176C1100 175 1115 158 1135 148C1160 125 1170 112 1190 112C1215 115 1230 128 1248 133C1268 125 1260 80 1298 79C1340 82 1362 115 1362 160C1358 210 1320 230 1303 250C1280 290 1260 345 1218 348C1190 345 1178 320 1183 296C1195 280 1220 292 1228 265C1238 225 1245 210 1240 200C1225 182 1200 182 1180 182C1170 195 1175 215 1165 240C1145 270 1143 300 1145 340C1148 380 1150 400 1143 440C1135 495 1100 515 1045 545C1020 565 1010 580 990 581C965 580 950 565 962 555C985 550 992 535 990 515C985 495 970 485 955 470C930 452 915 448 900 448C870 452 850 475 849 500C852 540 880 555 908 582C912 600 905 605 895 620C880 645 870 657 858 656C830 652 825 640 800 640C760 634 735 628 735 590C738 550 770 520 768 480C770 445 750 440 720 415C690 395 665 392 645 402C625 420 620 437 605 437C588 430 587 410 575 393C550 375 510 385 485 375C455 355 448 345 449 310C452 270 465 270 485 280C510 288 540 290 560 284C580 270 565 260 555 242C538 210 540 190 543 165C550 130 565 118 585 130C605 150 625 165 655 157C675 148 668 138 663 125C650 112 645 92 655 87Z" />
              <path d="M112 416C150 416 175 420 190 432C202 455 198 484 180 485C140 484 100 470 97 440C97 425 100 418 112 416Z" />
              <path d="M265 346C285 346 290 365 286 382C270 400 255 420 235 418C208 410 202 390 212 370C230 350 245 347 265 346Z" />
              <path d="M290 420C325 424 365 430 369 450C370 470 365 486 350 487C332 488 335 492 330 505C318 517 290 515 270 508C240 500 230 480 233 460C240 445 255 448 268 446C270 425 275 420 290 420Z" />
              <path d="M350 500C380 502 405 505 411 530C410 555 405 567 375 565C350 560 330 545 331 520C333 505 340 500 350 500Z" />
              <path d="M565 491C600 495 618 505 618 525C618 550 610 559 590 557C560 552 540 545 538 520C540 500 550 492 565 491Z" />
              <path d="M1222 540C1250 543 1247 560 1252 585C1262 605 1275 615 1285 613C1300 600 1300 583 1320 583C1355 590 1385 640 1386 680C1385 740 1350 790 1315 792C1285 785 1275 745 1255 745C1240 755 1235 785 1220 805C1210 830 1212 845 1217 855C1235 875 1235 895 1230 915C1220 940 1200 955 1197 970C1197 1010 1195 1020 1175 1038C1160 1055 1145 1058 1135 1058C1120 1055 1110 1040 1085 1020C1072 1005 1078 1000 1090 985C1110 970 1130 970 1133 955C1150 910 1160 880 1166 845C1168 820 1150 820 1120 803C1100 795 1108 785 1120 768C1135 745 1130 745 1118 725C1102 700 1105 680 1112 660C1130 625 1160 610 1190 598C1200 585 1188 565 1195 550C1200 542 1210 540 1222 540Z" />
            </g>
            <path d="M2566 1417C2580 1415 2592 1419 2595 1426C2596 1434 2592 1439 2584 1438C2574 1437 2563 1434 2561 1427C2560 1421 2562 1418 2566 1417Z" />
          </g>
          <g class="house">
            <path transform="translate(1240 1140) scale(.33333)" d="M493 105L518 92 542 135 520 152ZM325 230L332 218 345 222 350 211 372 232 348 256ZM290 270L337 297 302 356 257 330ZM190 406L236 443 205 484 160 446ZM138 472L188 514 150 557 130 543 116 548 94 525ZM265 487L330 530 304 566 240 520ZM352 372L372 360 411 413 393 428ZM320 422L340 403 362 425 344 443ZM368 432L382 416 398 432 384 448ZM385 455L403 446 437 494 418 506ZM343 455L405 490 395 505 440 533 422 563 363 533 370 518 325 490ZM402 565L434 587 404 628 372 604ZM582 484L614 518 585 548 550 514ZM537 626L582 658 570 678 600 710 562 755 484 694ZM678 665L725 700 698 746 646 715ZM724 706L771 732 741 777 701 750Z" />
            <path transform="translate(1560 1300) scale(.35714 .33333)" d="M350 251L386 290 343 330 305 290ZM343 330L388 306 409 341 365 371ZM703 487L668 449 621 497 665 543 688 520M645 583L700 545 720 585 670 620ZM410 555L436 560 435 594 405 590ZM397 640L415 614 447 638 430 665ZM548 650L565 630 590 655 578 674ZM792 675L803 661 819 676 807 690ZM955 641L1059 720 1021 782 990 768 982 772 945 732 930 727 905 711ZM247 653L287 687 270 710 277 725 262 740 240 738 197 708ZM527 671L571 708 550 739 508 700ZM512 718L538 745 520 778 485 745ZM522 765L556 794 537 824 505 800ZM440 774L497 806 450 895 393 862ZM504 834L543 860 508 920 468 888ZM558 870L598 897 563 958 523 930ZM772 716L803 745 772 787 738 757ZM727 765L765 797 732 853 693 820ZM684 833L720 862 684 917 645 880ZM696 1013L732 1048 690 1102 653 1056ZM817 1083L890 1069 901 1123 826 1133ZM1178 362L1226 362 1226 428 1178 428ZM1355 163L1410 150 1419 199 1367 214ZM1415 125L1461 115 1469 160 1427 170ZM1044 1078L1078 1105 1058 1133 1021 1103ZM1078 1110L1132 1144 1100 1192 1048 1155ZM1138 1078L1160 1093 1140 1127 1115 1110ZM1030 1166L1069 1195 1027 1266 984 1235ZM1100 1215L1140 1245 1097 1316 1053 1285ZM1165 1177L1223 1227 1203 1255 1147 1207ZM1213 1283L1268 1322 1256 1350 1284 1375 1252 1426 1220 1408 1220 1390 1170 1358ZM1366 1218L1413 1253 1382 1299 1358 1280 1370 1258 1350 1236ZM1433 1320L1491 1365 1475 1398 1412 1354ZM1335 1384L1410 1430 1380 1496 1314 1452 1332 1415 1323 1405ZM1433 1420L1461 1437 1424 1503 1392 1480Z" />
            <path transform="translate(1340 780) scale(.61224 .39541)" d="M1218 1163L1277 1105 1287 1135 1246 1175 1265 1228 1248 1242ZM1313 1083L1356 1166 1333 1196 1290 1110ZM1361 1181L1379 1228 1296 1296 1280 1248ZM1344 1278L1385 1267 1396 1360 1374 1365 1363 1306 1350 1311ZM1369 1383L1397 1376 1406 1468 1380 1472Z" />
          </g>
          <g class="family" transform="translate(1560 1300) scale(.35714 .33333)">
            <path d="M397 432L450 402 465 403 475 423 415 455ZM441 490L497 460 524 510 468 541ZM367 580L411 597 389 649 344 628ZM519 610L555 582 579 615 541 643ZM385 668L422 688 405 718 370 698ZM412 700L430 686 492 716 462 772 414 740ZM448 740L460 708 468 712 455 742ZM357 724L412 760 370 849 310 815ZM761 660L784 682 735 758 708 735ZM692 735L721 760 697 797 664 767ZM620 907L660 935 627 997 586 968ZM771 907L809 945 772 998 728 962ZM833 936L883 977 830 1049 778 1010ZM1007 812L1077 872 1035 927 965 869ZM944 983L962 1008 975 1005 997 1030 957 1078 905 1026ZM1025 965L1051 988 1018 1030 995 1010ZM1000 1043L1034 1078 993 1122 958 1085ZM960 1126L1001 1158 960 1222 915 1188Z" />
            {#each plots as [x, y, t]}<text {x} y={y + 3}>{t}</text>{/each}
          </g>
        </svg>
      </div>
    </div>
    <footer class="status"><i class="s1"></i><i class="s2"></i><i class="s3"></i></footer>
  </section>
</main>

<style>
  :global(body) { margin: 0; background: #fff; }
  .page { box-sizing: border-box; width: 3509px; height: 2481px; border: 5px solid #f8564c; padding: 331px 349px 0 350px; background: #fff; overflow: hidden; }
  h1 { margin: 0; height: 182px; font: 500 50px/60px Ubuntu, 'Noto Sans', 'Open Sans', sans-serif; color: #273462; white-space: nowrap; }
  h1 span { display: inline-block; }
  .window { display: flex; flex-direction: column; width: 2800px; height: 1480px; font: 16px/20px 'Segoe UI', 'Noto Sans', 'Open Sans', sans-serif; color: #000; }
  .label { display: inline-block; white-space: nowrap; flex: none; }
  .icon { display: block; width: 24px; height: 24px; flex: none; overflow: visible; }
  i { display: block; flex: none; }

  .titlebar { display: flex; align-items: center; height: 33px; padding-left: 2px; padding-bottom: 3px; box-sizing: border-box; color: #8e8e8e; }
  .logo { width: 24px; height: 24px; margin-right: 8px; }
  .controls { width: 150px; height: 16px; margin-left: auto; margin-right: 29px; }
  .menubar { display: flex; align-items: center; gap: 20.600px; box-sizing: border-box; height: 29px; padding-left: 15px; background: #efefef; border-bottom: 2px solid #d2d2d2; color: #979797; }
  .menubar u { text-underline-offset: 3px; }
  .toolbar { display: flex; align-items: center; box-sizing: border-box; height: 45px; background: linear-gradient(#fafafa, #efefef); border-bottom: 2px solid #b5b5b5; }
  .toolbar.second { border-bottom-width: 1px; }
  .toolbar.third { height: 44px; }
  .slot { display: flex; align-items: center; justify-content: center; width: 36.450px; height: 33px; flex: none; }
  .grip { width: 23.300px; height: 24px; background: radial-gradient(circle at 1.500px 1.500px, #b5b5b5 1px, transparent 1.500px) 8px 0 / 4px 4px repeat; background-clip: content-box; padding: 0 7px 0 9px; box-sizing: border-box; }
  .grip.first { width: 18px; padding: 0 5px 0 6px; background-position: 0 0; }
  .drop { display: flex; width: 17.600px; height: 33px; align-items: center; justify-content: center; flex: none; }
  .drop::after { content: ''; border: 5px solid transparent; border-top: 6px solid #555; border-bottom: 0; }
  .drop.dim::after { border-top-color: #9a9a9a; }
  .pressed { box-sizing: border-box; background: #d9d9d9; border: 1.500px solid #ababab; border-radius: 4px; }

  .body { display: flex; height: 1279px; }
  .side { display: flex; flex-direction: column; box-sizing: border-box; width: 63px; border-right: 2px solid #b5b5b5; background: linear-gradient(90deg, #fafafa, #eeeeee); padding: 8px 0 0 11px; }
  .side-grip { width: 24px; height: 7px; margin: 0 0 4px 10px; background: radial-gradient(circle at 1.500px 1.500px, #c4c4c4 .7px, transparent 1.200px) 0 0 / 4px 4px; }
  .side-row { display: flex; align-items: center; height: 35px; }
  .side-row .drop { margin-left: 5px; }

  .docks { display: flex; flex-direction: column; box-sizing: border-box; width: 596px; padding-left: 1px; background: #f0f0f0; }
  .dock-title { display: flex; align-items: center; justify-content: space-between; height: 31px; width: 586px; box-sizing: border-box; padding: 0 2px 0 6px; }
  .dock-buttons { width: 38px; height: 17px; }
  .dock-tools { display: flex; align-items: center; box-sizing: border-box; height: 43px; padding: 0 0 3px 5px; }
  .dock-tools.lower { height: 42px; padding-bottom: 3px; }
  .list { box-sizing: border-box; width: 586px; border: 2px solid #b5b5b5; border-right-width: 1.500px; background: #fff; padding-top: 1px; }
  .list.browser { height: 562px; }
  .list.layers { flex: 1; padding-top: 1px; }
  .row { display: flex; align-items: center; height: 26.220px; }
  .twist { display: flex; justify-content: center; align-items: center; width: 29px; flex: none; }
  .twist.right::after { content: ''; border: 5px solid transparent; border-left: 6px solid #555; border-right: 0; }
  .twist.down::after { content: ''; border: 5.500px solid transparent; border-top: 6px solid #555; border-bottom: 0; }
  .pic { width: 37px; flex: none; }
  .browser .pic { margin-left: 4px; width: 33px; }
  .row.child { width: 223px; background: #f0f0f0; }
  .child .twist { width: 58px; }
  .child .pic { margin-left: 4px; }
  .splitter { display: flex; height: 8px; align-items: center; justify-content: center; }
  .splitter i { width: 24px; height: 3px; background: radial-gradient(circle at 1.500px 1.500px, #c0c0c0 .7px, transparent 1.200px) 0 0 / 4px 4px; }
  .level1 { padding-left: 29px; }
  .level2 { padding-left: 58px; }
  .check { display: flex; box-sizing: border-box; width: 20px; height: 20px; margin: 0 10px 0 4px; border: 1.500px solid #b9b9b9; background: #fff; flex: none; }
  .check svg { width: 100%; height: 100%; }
  .layers .pic { width: 32px; }
  .layers .icon { width: 22px; }
  .leaf .label { font-weight: 700; }
  .row.current { background: #f0f0f0; }
  .current .label { text-decoration: underline; text-decoration-thickness: 2px; text-underline-offset: 3px; }
  .end { margin-left: auto; margin-right: 2px; }

  .map { box-sizing: border-box; width: 2140px; height: 1278px; margin-top: 1px; border: 2px solid #b5b5b5; border-right: 1px solid #c8c8c8; background: #fff; overflow: hidden; }
  .map svg { display: block; width: 2137px; height: 1274px; }
  .map path { vector-effect: non-scaling-stroke; }
  .wood { fill: #61994e; }
  .link { stroke: #61994e; stroke-width: 1.500; }
  .river { stroke: #95c9fb; stroke-width: 1.500; }
  .road { stroke: #74a5da; stroke-width: 1.600; }
  .house { stroke: #d9d9d9; stroke-width: 1.500; }
  .family { stroke: #e3a1b3; stroke-width: 1.900; }
  .family text { fill: #f6a9ba; stroke: none; font-size: 13px; font-weight: 700; text-anchor: middle; font-family: 'Liberation Sans', sans-serif; }

  .status { display: flex; align-items: flex-end; height: 5px; background: #efefef; }
  .status i { height: 1.500px; background: #ababab; }
  .s1 { width: 294px; }
  .s2 { width: 131px; margin-left: 1433px; }
  .s3 { width: 114px; margin-left: 93px; }
</style>
